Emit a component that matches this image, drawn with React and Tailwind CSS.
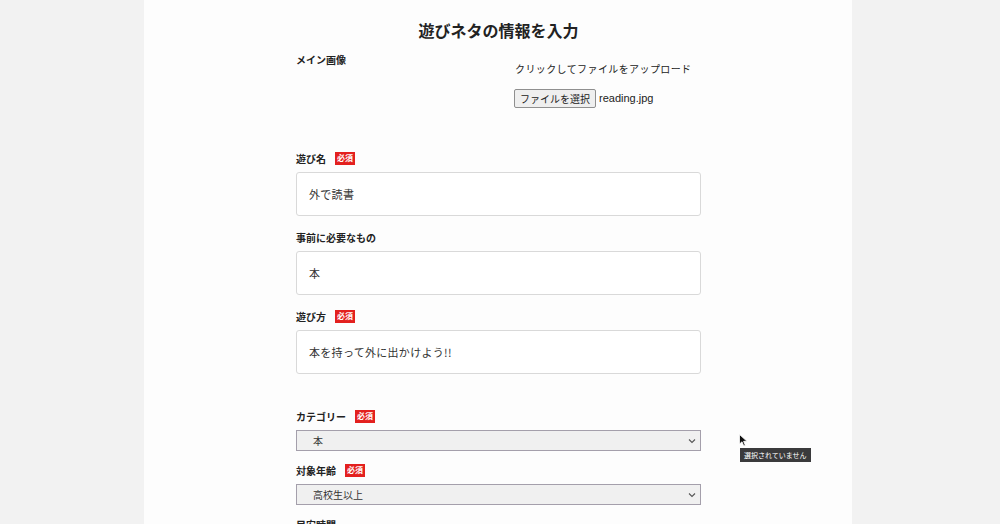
import React from 'react';

const font = { fontFamily: '"Noto Sans CJK JP", "Noto Sans", sans-serif' };

function Required() {
  return (
    <span className="ml-[9px] inline-flex h-[13px] items-center bg-[#e3201e] px-[2px] text-[8px] font-bold leading-none text-white">
      必須
    </span>
  );
}

function Label({ children, required }) {
  return (
    <div className="flex h-[14px] items-center text-[10px] font-bold text-[#222]">
      <span>{children}</span>
      {required && <Required />}
    </div>
  );
}

function TextBox({ value }) {
  return (
    <div className="mt-[7px] flex h-[44px] items-center rounded-[3px] border border-[#d9d9d9] bg-white px-[12px] text-[11px] tracking-[0.3px] text-[#333]">
      {value}
    </div>
  );
}

function SelectBox({ value }) {
  return (
    <div className="relative mt-[7px] flex h-[21px] items-center border border-[#a49fab] bg-[#f0f0f0] pl-[16px] text-[10px] text-[#333]">
      {value}
      <svg className="absolute right-[4px] top-[7px]" width="8" height="6" viewBox="0 0 8 6" fill="none">
        <path d="M1 1.5 L4 4.5 L7 1.5" stroke="#555" strokeWidth="1.1" />
      </svg>
    </div>
  );
}

export default function App() {
  return (
    <div className="flex min-h-[524px] w-full bg-[#f2f2f2]" style={font}>
      <div className="relative ml-[144px] h-[524px] w-[708px] overflow-hidden bg-[#fdfdfd]">
        <div className="ml-[152px] w-[405px] pt-[20px]">
          <h1 className="text-center text-[16px] font-bold leading-[20px] text-[#222]">遊びネタの情報を入力</h1>

          <div className="mt-[13px] flex">
            <div className="w-[218px] text-[10px] font-bold leading-[14px] text-[#222]">メイン画像</div>
            <div className="pt-[9px]">
              <div className="ml-[1px] text-[10px] leading-[14px] tracking-[0.4px] text-[#222]">クリックしてファイルをアップロード</div>
              <div className="mt-[13px] flex items-center">
                <span className="flex h-[19px] items-center rounded-[2px] border border-[#8f8f8f] bg-[#efefef] px-[5px] text-[10px] text-[#222]">
                  ファイルを選択
                </span>
                <span className="ml-[3px] text-[11px] text-[#222]" style={{ fontFamily: '"Liberation Sans", Arial, sans-serif' }}>
                  reading.jpg
                </span>
              </div>
            </div>
          </div>

          <div className="mt-[43px]">
            <Label required>遊び名</Label>
            <TextBox value="外で読書" />
          </div>

          <div className="mt-[14px]">
            <Label>事前に必要なもの</Label>
            <TextBox value="本" />
          </div>

          <div className="mt-[14px]">
            <Label required>遊び方</Label>
            <TextBox value="本を持って外に出かけよう!!" />
          </div>

          <div className="mt-[35px]">
            <Label required>カテゴリー</Label>
            <SelectBox value="本" />
          </div>

          <div className="mt-[12px]">
            <Label required>対象年齢</Label>
            <SelectBox value="高校生以上" />
          </div>

          <div className="mt-[12px]">
            <Label>目安時間</Label>
          </div>
        </div>

        <svg className="absolute left-[595px] top-[434px]" width="9" height="13" viewBox="0 0 9 13">
          <path d="M0.5 0.5 L0.5 10 L3 7.8 L4.8 12 L6.3 11.3 L4.6 7.3 L8 7.3 Z" fill="#111" stroke="#fff" strokeWidth="0.8" />
        </svg>
        <div className="absolute left-[596px] top-[448px] flex h-[14px] items-center bg-[#3a3a3c] px-[4px] text-[7px] leading-none text-white">
          選択されていません
        </div>
      </div>
    </div>
  );
}
